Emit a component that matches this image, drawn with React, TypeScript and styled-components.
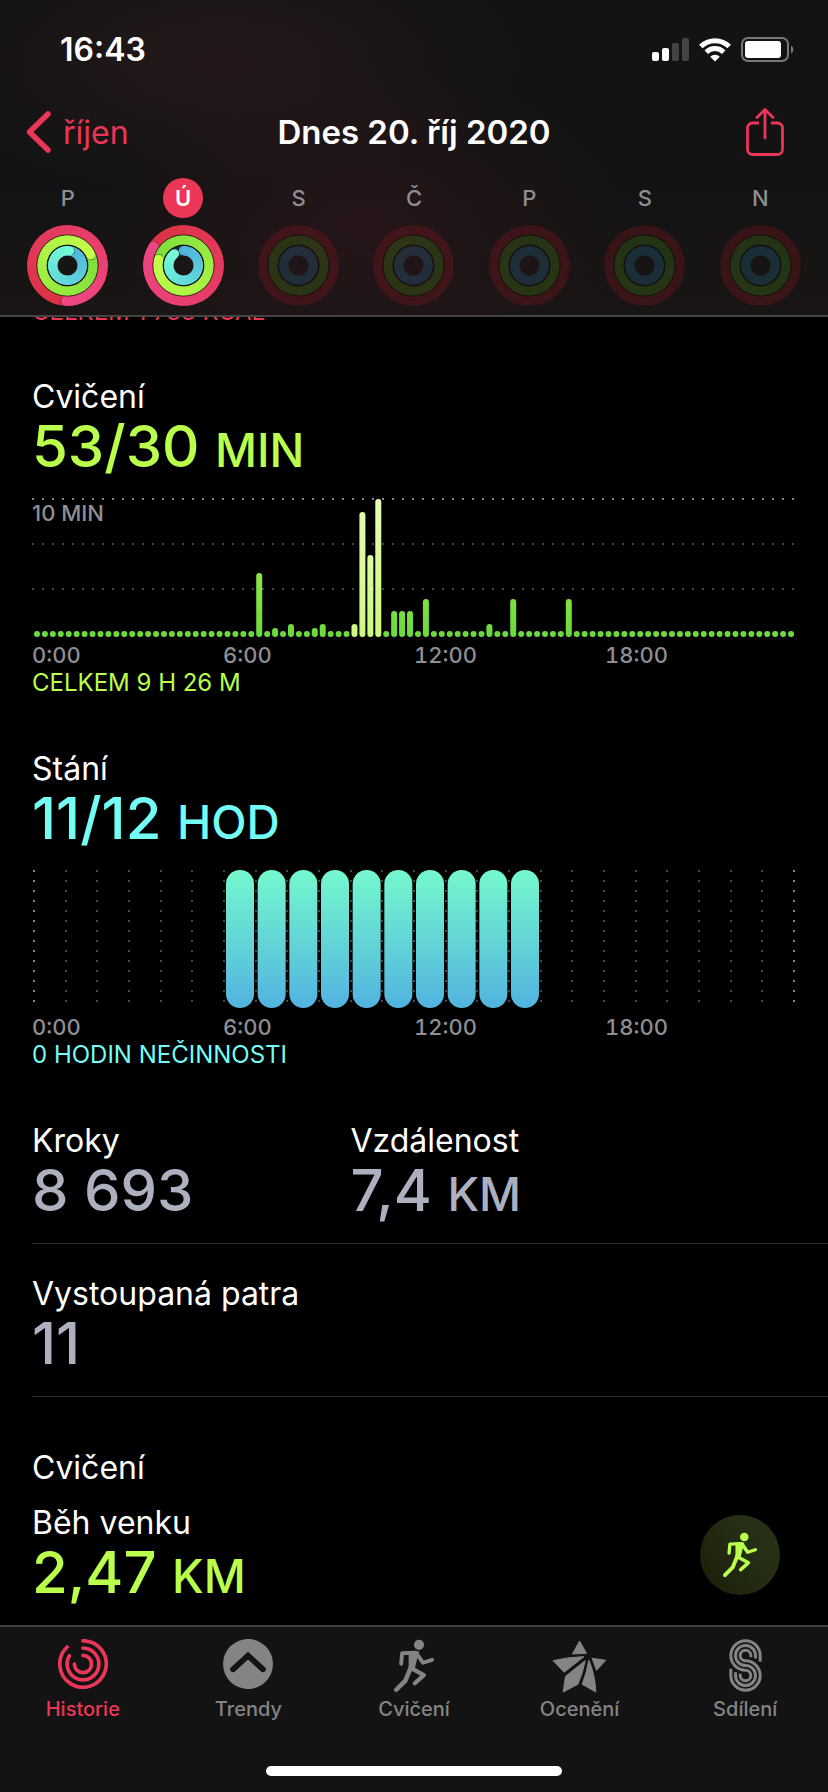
import React from "react";
import styled, { createGlobalStyle } from "styled-components";

const RED = "#eb3657";
const GREEN = "#b9ff4b";
const CYAN = "#74fdf5";
const SILVER = "#adb0bf";
const GRAY = "#8e8e93";
const TAB_GRAY = "#848484";

const GlobalStyle = createGlobalStyle`
  *, *::before, *::after { box-sizing: border-box; }
  body {
    margin: 0;
    background: #000;
    color: #fff;
    font-family: Inter, "Liberation Sans", sans-serif;
  }
  h1, h2, h3, p { margin: 0; font-weight: 400; }
  button { font: inherit; color: inherit; background: none; border: 0; padding: 0; cursor: pointer; }
  svg { display: block; }
`;

const Page = styled.div`
  display: flex;
  flex-direction: column;
  min-height: 100vh;
`;

/* ---------- Header ---------- */

const Header = styled.header`
  position: sticky;
  top: 0;
  z-index: 2;
  border-bottom: 2px solid #444346;
  background:
    radial-gradient(ellipse 36% 42% at 27% 20%, #29191ccc, transparent),
    radial-gradient(ellipse 32% 50% at 44% 70%, #2a1519cc, transparent),
    linear-gradient(#131313 60%, #1a1515);
`;

const StatusBar = styled.div`
  display: flex;
  align-items: center;
  justify-content: space-between;
  height: 88px;
  padding: 11px 34px 0 60px;
`;

const Clock = styled.time`
  font-size: 32px;
  font-weight: 600;
`;

const StatusIcons = styled.div`
  display: flex;
  align-items: center;
  gap: 10px;
`;

const NavBar = styled.div`
  display: grid;
  grid-template-columns: 1fr auto 1fr;
  align-items: center;
  height: 88px;
  padding: 0 26px;
`;

const BackButton = styled.button`
  display: flex;
  align-items: center;
  gap: 12px;
  justify-self: start;
  color: ${RED};
  font-size: 32px;
`;

const Title = styled.h1`
  font-size: 33px;
  font-weight: 600;
`;

const ShareButton = styled.button`
  justify-self: end;
  padding: 0 18px;
  color: ${RED};
`;

const Week = styled.div`
  display: grid;
  grid-template-columns: repeat(7, 1fr);
  padding: 2px 10px 9px;
`;

const Day = styled.button`
  display: flex;
  flex-direction: column;
  align-items: center;
  gap: 7px;
`;

const DayLabel = styled.span<{ $active?: boolean }>`
  width: 40px;
  border-radius: 50%;
  line-height: 40px;
  font-size: 22px;
  font-weight: ${(p) => (p.$active ? 600 : 500)};
  color: ${(p) => (p.$active ? "#fff" : GRAY)};
  background: ${(p) => (p.$active ? RED : "transparent")};
`;

/* ---------- Content ---------- */

const Main = styled.main`
  flex: 1;
  margin-top: -19px;
  padding-left: 32px;
`;

const Summary = styled.p<{ $color: string }>`
  font-size: 24px;
  line-height: 28px;
  color: ${(p) => p.$color};
`;

const EnergySummary = styled(Summary)`
  margin-bottom: 21px;
`;

const ChartSection = styled.section`
  padding: 30px 32px 22px 0;
`;

const Label = styled.h2`
  font-size: 32px;
  line-height: 40px;
`;

const Value = styled.p<{ $color: string }>`
  font-size: 58px;
  line-height: 58px;
  font-weight: 500;
  color: ${(p) => p.$color};
`;

const Unit = styled.span`
  font-size: 46px;
  line-height: 1;
`;

const Plot = styled.div`
  position: relative;
  margin-top: 23px;
`;

const PlotLabel = styled.span`
  position: absolute;
  top: 1px;
  left: 0;
  font-size: 22px;
  line-height: 28px;
  font-weight: 500;
  color: ${GRAY};
`;

const Axis = styled.div`
  display: grid;
  grid-template-columns: repeat(4, 1fr);
  margin-top: 4px;
  font-size: 22px;
  line-height: 28px;
  font-weight: 500;
  font-variant-numeric: tabular-nums;
  color: ${GRAY};
`;

const StatRow = styled.section`
  display: grid;
  grid-template-columns: 2fr 3fr;
  padding: 30px 0 24px;
  border-bottom: 1px solid #2f2f31;
`;

const Workouts = styled.section`
  padding: 51px 48px 24px 0;
`;

const Workout = styled.div`
  display: flex;
  align-items: flex-end;
  justify-content: space-between;
  margin-top: 15px;
`;

const WorkoutBadge = styled.div`
  display: grid;
  place-items: center;
  width: 80px;
  height: 80px;
  margin-bottom: 6px;
  border-radius: 50%;
  color: ${GREEN};
  background: linear-gradient(55deg, #1b1d08, #263017 70%);
`;

/* ---------- Tab bar ---------- */

const Footer = styled.footer`
  position: sticky;
  bottom: 0;
  z-index: 2;
  padding-bottom: 16px;
  border-top: 2px solid #3f3f41;
  background: #131313;
`;

const Tabs = styled.nav`
  display: grid;
  grid-template-columns: repeat(5, 1fr);
  padding-top: 12px;
`;

const Tab = styled.a<{ $active?: boolean }>`
  display: flex;
  flex-direction: column;
  align-items: center;
  gap: 8px;
  font-size: 20px;
  line-height: 24px;
  font-weight: 500;
  text-decoration: none;
  color: ${(p) => (p.$active ? RED : TAB_GRAY)};
`;

const TabIcon = styled.span`
  display: grid;
  place-items: center;
  height: 50px;
`;

const HomeIndicator = styled.div`
  width: 296px;
  height: 10px;
  margin: 45px auto 0;
  border-radius: 5px;
  background: #fff;
`;

/* ---------- Activity rings ---------- */

type RGB = [number, number, number];

const point = (r: number, deg: number) => {
  const a = (deg * Math.PI) / 180;
  return [41 + r * Math.sin(a), 41 - r * Math.cos(a)];
};

const arc = (r: number, from: number, to: number) => {
  const [x1, y1] = point(r, from);
  const [x2, y2] = point(r, to);
  return `M${x1} ${y1}A${r} ${r} 0 ${to - from > 180 ? 1 : 0} 1 ${x2} ${y2}`;
};

const mix = (a: RGB, b: RGB, t: number) =>
  `rgb(${a.map((v, i) => Math.round(v + (b[i] - v) * t)).join(",")})`;

const RING_SPECS: { r: number; from: RGB; to: RGB; dim: string }[] = [
  { r: 36, from: [220, 50, 66], to: [238, 70, 134], dim: "rgba(210,20,40,.18)" },
  { r: 26, from: [124, 222, 60], to: [196, 255, 74], dim: "rgba(90,190,20,.19)" },
  { r: 15, from: [80, 180, 222], to: [116, 250, 214], dim: "rgba(40,150,200,.2)" },
];

const STEPS = 60;

function Ring({ r, from, to, head, full }: { r: number; from: RGB; to: RGB; head: number; full: boolean }) {
  const start = full ? head - 360 : 0;
  const step = (head - start) / STEPS;
  const [sx, sy] = point(r, start);
  const [hx, hy] = point(r, head);
  const [dx, dy] = point(r, head + 90 / r);
  return (
    <g fill="none" strokeWidth="9.5">
      {!full && <circle cx={sx} cy={sy} r="4.7" fill={mix(from, to, 0)} />}
      {Array.from({ length: STEPS }, (_, i) => (
        <path
          key={i}
          d={arc(r, start + i * step, start + (i + 1) * step + (i < STEPS - 1 ? 5 : 0))}
          stroke={mix(from, to, i / (STEPS - 1))}
        />
      ))}
      {full && <circle cx={dx} cy={dy} r="4" fill="rgba(0,0,0,.35)" />}
      <circle cx={hx} cy={hy} r="4.7" fill={mix(from, to, 1)} />
    </g>
  );
}

function Rings({ heads, closed }: { heads?: number[]; closed?: boolean[] }) {
  return (
    <svg width="81" height="81" viewBox="0 0 82 82" aria-hidden="true">
      {RING_SPECS.map((s, i) => (
        <g key={i}>
          <circle cx="41" cy="41" r={s.r} fill="none" stroke={s.dim} strokeWidth="9.5" />
          {heads && <Ring r={s.r} from={s.from} to={s.to} head={heads[i]} full={closed![i]} />}
        </g>
      ))}
      <g fill="none" stroke="#100d0e" strokeWidth="1" opacity=".7">
        <circle cx="41" cy="41" r="31" />
        <circle cx="41" cy="41" r="20.4" />
      </g>
    </svg>
  );
}

/* ---------- Icons ---------- */

const SignalIcon = () => (
  <svg width="37" height="24" viewBox="0 0 37 24" fill="#fff" aria-hidden="true">
    <rect x="0" y="14" width="7" height="9" rx="2" />
    <rect x="10" y="10" width="7" height="13" rx="2" />
    <rect x="20" y="5" width="7" height="18" rx="2" fill="#434343" />
    <rect x="30" y="0" width="7" height="23" rx="2" fill="#434343" />
  </svg>
);

const WifiIcon = () => (
  <svg width="32" height="24" viewBox="0 0 32 24" aria-hidden="true">
    <g fill="none" stroke="#fff" strokeWidth="5">
      <path d="M1.8 8.6A20 20 0 0 1 30.2 8.6" />
      <path d="M7.3 14.2A12.3 12.3 0 0 1 24.7 14.2" />
    </g>
    <path d="M16 23.5L11.2 18.7A6.8 6.8 0 0 1 20.8 18.7Z" fill="#fff" />
  </svg>
);

const BatteryIcon = () => (
  <svg width="53" height="25" viewBox="0 0 53 25" aria-hidden="true">
    <rect x="1" y="1" width="46" height="23" rx="6" fill="none" stroke="#777" strokeWidth="2" />
    <rect x="4" y="4" width="36" height="17" rx="3" fill="#fff" />
    <path d="M50 8.5a4.5 4.5 0 0 1 0 8z" fill="#777" />
  </svg>
);

const BackIcon = () => (
  <svg width="25" height="42" viewBox="0 0 25 42" aria-hidden="true">
    <path d="M22 3L3.5 21L22 39" fill="none" stroke="currentColor" strokeWidth="5.5" strokeLinecap="round" strokeLinejoin="round" />
  </svg>
);

const ShareIcon = () => (
  <svg width="38" height="48" viewBox="0 0 38 48" fill="none" stroke="currentColor" strokeWidth="2.8" aria-hidden="true">
    <path d="M13 15H6.5A5 5 0 0 0 1.5 20V41.5A5 5 0 0 0 6.5 46.5H31.5A5 5 0 0 0 36.5 41.5V20A5 5 0 0 0 31.5 15H25" />
    <path d="M19 30V2M11 9.5L19 1.5L27 9.5" strokeLinecap="round" strokeLinejoin="round" />
  </svg>
);

const RunnerIcon = ({ width, height }: { width: number; height: number }) => (
  <svg width={width} height={height} viewBox="96 32 129 166" aria-hidden="true">
    <circle cx="176" cy="50" r="15.5" fill="currentColor" />
    <path d="M144 70L176 70L163 122L144 138Z" fill="currentColor" />
    <g fill="none" stroke="currentColor" strokeLinecap="round" strokeLinejoin="round">
      <path d="M121 108L124 76L166 74" strokeWidth="12" />
      <path d="M170 78L188 105L216 96" strokeWidth="12" />
      <path d="M152 116L134 160L106 188" strokeWidth="14" />
      <path d="M156 124L191 143L163 168" strokeWidth="13" />
    </g>
  </svg>
);

const HistoryIcon = () => {
  const turns: [number, number][] = [[36.5, 317], [25, 301], [13.5, 270]];
  return (
    <svg width="50" height="50" viewBox="1.7 1.7 78.6 78.6" fill="none" stroke="currentColor" strokeWidth="5.8" strokeLinecap="round" aria-hidden="true">
      {turns.map(([r, end]) => (
        <path key={r} d={arc(r, 0, end)} />
      ))}
    </svg>
  );
};

const TrendsIcon = () => (
  <svg width="50" height="50" viewBox="0 0 150 150" aria-hidden="true">
    <circle cx="75" cy="75" r="75" fill="currentColor" />
    <path d="M30 91L75 50L120 91" fill="none" stroke="#131313" strokeWidth="17" strokeLinecap="round" />
  </svg>
);

const AwardsIcon = () => (
  <svg width="57" height="55" viewBox="410 472 170 165" fill="currentColor" stroke="currentColor" strokeWidth="3" strokeLinejoin="round" aria-hidden="true">
    <path d="M495 478L516 515L474 517Z" />
    <path d="M416 537Q460 526 508 525L449 572Z" />
    <path d="M533 530L574 536L546 566Z" />
    <path d="M512 537L453 584L446 631L490 608Q505 575 512 537Z" />
    <path d="M523 536Q541 575 544 631L503 608Q516 575 523 536Z" />
  </svg>
);

const SharingIcon = () => (
  <svg width="33" height="53" viewBox="592.5 37.5 99 159" fill="none" stroke="currentColor" strokeWidth="9" aria-hidden="true">
    <path d="M686 106V87A44 44 0 1 0 642 131A16 16 0 1 1 626 147V142" />
    <path d="M672 96V87A30 30 0 1 0 642 117A30 30 0 1 1 612 147V137" />
    <path d="M658 92V87A16 16 0 1 0 642 103A44 44 0 1 1 598 147V127" />
  </svg>
);

/* ---------- Charts ---------- */

const SLOTS = 96;
const EXERCISE: Record<number, number> = {
  28: 64, 30: 9, 32: 13, 35: 9, 36: 13, 40: 13, 41: 125, 42: 82, 43: 138,
  45: 26, 46: 26, 47: 26, 49: 38, 57: 13, 60: 38, 67: 38,
};
const isWorkout = (slot: number) => slot >= 40 && slot <= 43;

function ExerciseChart() {
  const pitch = 762 / SLOTS;
  return (
    <svg width="100%" viewBox="0 0 764 139" role="img" aria-label="Cvičení během dne">
      <defs>
        <linearGradient id="exercise" gradientUnits="userSpaceOnUse" x1="0" y1="139" x2="0" y2="0">
          <stop offset="0" stopColor="#6bd93d" />
          <stop offset="1" stopColor="#b4f552" />
        </linearGradient>
        <linearGradient id="workout" gradientUnits="userSpaceOnUse" x1="0" y1="139" x2="0" y2="0">
          <stop offset="0" stopColor="#ccf97f" />
          <stop offset="1" stopColor="#e4fcb8" />
        </linearGradient>
      </defs>
      {[0, 45, 90].map((y) => (
        <path key={y} d={`M0 ${y + 1}H762`} stroke={y === 0 ? "#88888b" : "#48484a"} strokeWidth="2" strokeDasharray="2 8" />
      ))}
      {Array.from({ length: SLOTS }, (_, i) => {
        const h = EXERCISE[i] ?? 6;
        return (
          <rect
            key={i}
            x={1 + pitch * (i + 0.5) - 3}
            y={139 - h}
            width="6"
            height={h}
            rx="3"
            fill={isWorkout(i) ? "url(#workout)" : "url(#exercise)"}
          />
        );
      })}
    </svg>
  );
}

const STAND_HOURS = [6, 7, 8, 9, 10, 11, 12, 13, 14, 15];

function StandChart() {
  const pitch = 760 / 24;
  return (
    <svg width="100%" viewBox="0 0 764 139" role="img" aria-label="Stání během dne">
      <defs>
        <linearGradient id="stand" x1="0" y1="0" x2="0" y2="1">
          <stop offset="0" stopColor="#75f9cd" />
          <stop offset="1" stopColor="#52b3e0" />
        </linearGradient>
      </defs>
      {Array.from({ length: 25 }, (_, i) => {
        const x = Math.round(pitch * i) + 2;
        return (
          <path key={i} d={`M${x} 0V138`} stroke={i % 24 === 0 ? "#88888b" : "#48484a"} strokeWidth="2" strokeDasharray="2 8" />
        );
      })}
      {STAND_HOURS.map((h) => (
        <rect key={h} x={4 + pitch * h} y="0" width="28" height="138" rx="14" fill="url(#stand)" />
      ))}
    </svg>
  );
}

const HourAxis = () => (
  <Axis>
    <span>0:00</span>
    <span>6:00</span>
    <span>12:00</span>
    <span>18:00</span>
  </Axis>
);

function Stat({ label, value, unit, color }: { label: string; value: string; unit?: string; color: string }) {
  return (
    <div>
      <Label>{label}</Label>
      <Value $color={color}>
        {value}
        {unit && <> <Unit>{unit}</Unit></>}
      </Value>
    </div>
  );
}

/* ---------- Screen ---------- */

const DAYS: { label: string; active?: boolean; heads?: number[]; closed?: boolean[] }[] = [
  { label: "P", heads: [183, 65, 8], closed: [true, true, true] },
  { label: "Ú", active: true, heads: [303, 284, 322], closed: [true, true, false] },
  { label: "S" },
  { label: "Č" },
  { label: "P" },
  { label: "S" },
  { label: "N" },
];

const TABS = [
  { label: "Historie", icon: <HistoryIcon />, active: true },
  { label: "Trendy", icon: <TrendsIcon /> },
  { label: "Cvičení", icon: <RunnerIcon width={42} height={54} /> },
  { label: "Ocenění", icon: <AwardsIcon /> },
  { label: "Sdílení", icon: <SharingIcon /> },
];

export default function App() {
  return (
    <Page>
      <GlobalStyle />
      <Header>
        <StatusBar>
          <Clock>16:43</Clock>
          <StatusIcons>
            <SignalIcon />
            <WifiIcon />
            <BatteryIcon />
          </StatusIcons>
        </StatusBar>
        <NavBar>
          <BackButton type="button">
            <BackIcon />
            říjen
          </BackButton>
          <Title>Dnes 20. říj 2020</Title>
          <ShareButton type="button" aria-label="Sdílet">
            <ShareIcon />
          </ShareButton>
        </NavBar>
        <Week>
          {DAYS.map((d, i) => (
            <Day key={i} type="button">
              <DayLabel $active={d.active}>{d.label}</DayLabel>
              <Rings heads={d.heads} closed={d.closed} />
            </Day>
          ))}
        </Week>
      </Header>

      <Main>
        <EnergySummary $color={RED}>CELKEM 1 733 KCAL</EnergySummary>

        <ChartSection>
          <Stat label="Cvičení" value="53/30" unit="MIN" color={GREEN} />
          <Plot>
            <ExerciseChart />
            <PlotLabel>10 MIN</PlotLabel>
          </Plot>
          <HourAxis />
          <Summary $color={GREEN}>CELKEM 9 H 26 M</Summary>
        </ChartSection>

        <ChartSection>
          <Stat label="Stání" value="11/12" unit="HOD" color={CYAN} />
          <Plot>
            <StandChart />
          </Plot>
          <HourAxis />
          <Summary $color={CYAN}>0 HODIN NEČINNOSTI</Summary>
        </ChartSection>

        <StatRow>
          <Stat label="Kroky" value="8 693" color={SILVER} />
          <Stat label="Vzdálenost" value="7,4" unit="KM" color={SILVER} />
        </StatRow>
        <StatRow>
          <Stat label="Vystoupaná patra" value="11" color={SILVER} />
        </StatRow>

        <Workouts>
          <Label>Cvičení</Label>
          <Workout>
            <Stat label="Běh venku" value="2,47" unit="KM" color={GREEN} />
            <WorkoutBadge>
              <RunnerIcon width={36} height={46} />
            </WorkoutBadge>
          </Workout>
        </Workouts>
      </Main>

      <Footer>
        <Tabs>
          {TABS.map((t) => (
            <Tab key={t.label} href="#" $active={t.active}>
              <TabIcon>{t.icon}</TabIcon>
              {t.label}
            </Tab>
          ))}
        </Tabs>
        <HomeIndicator />
      </Footer>
    </Page>
  );
}
